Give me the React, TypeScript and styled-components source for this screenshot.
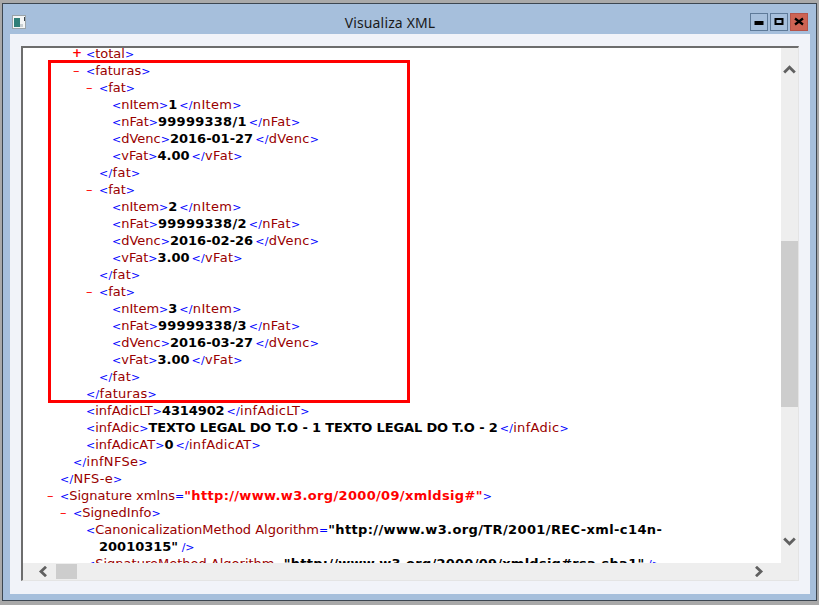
import React from 'react';
import styled, { createGlobalStyle } from 'styled-components';

const GlobalStyle = createGlobalStyle`
  html, body {
    margin: 0;
    padding: 0;
    background-color: #a9a9a9;
  }
`;

const Screen = styled.div`
  width: 819px;
  height: 605px;
  padding: 3px 2px 4px 2px;
  box-sizing: border-box;
  overflow: hidden;
`;

const Window = styled.div`
  height: 100%;
  box-sizing: border-box;
  border: 1px solid #3c4650;
  background-color: #a6bfdc;
  display: flex;
  flex-direction: column;
  padding: 0 6px 6px 7px;
`;

const TitleBar = styled.div`
  height: 30px;
  flex: none;
  display: flex;
  align-items: flex-start;
  position: relative;
`;

const AppIcon = styled.svg`
  width: 14px;
  height: 14px;
  margin-left: 2px;
  margin-top: 11px;
`;

const Title = styled.div`
  position: absolute;
  left: 0;
  right: 40px;
  top: 10px;
  text-align: center;
  font-family: 'Noto Sans', 'DejaVu Sans', sans-serif;
  font-size: 14px;
  letter-spacing: 0.15px;
  line-height: 18px;
  color: #1a1a1a;
`;

const Controls = styled.div`
  margin-left: auto;
  margin-top: 9px;
  margin-right: 2px;
  display: flex;
  gap: 2px;
`;

const ControlButton = styled.div<{ $close?: boolean }>`
  width: 16px;
  height: 16px;
  border: 1px solid ${(p) => (p.$close ? '#b5534a' : '#5e7a99')};
  background-color: ${(p) => (p.$close ? '#cd6353' : '#a6bfdc')};
  display: flex;
  align-items: center;
  justify-content: center;
`;

const Client = styled.div`
  flex: 1;
  min-height: 0;
  background-color: #f1f3f9;
  padding: 12px 11px 13px 11px;
  display: flex;
`;

const Browser = styled.div`
  flex: 1;
  min-width: 0;
  display: grid;
  grid-template-columns: 1fr 17px;
  grid-template-rows: 1fr 17px;
  border-top: 2px solid #6d6d6d;
  border-left: 2px solid #6d6d6d;
  border-right: 1px solid #e4e4e4;
  border-bottom: 1px solid #e4e4e4;
  background-color: #eeeeee;
  position: relative;
`;

const Viewport = styled.div`
  background-color: #ffffff;
  overflow: hidden;
  min-height: 0;
`;

const XmlBody = styled.div`
  margin-top: -3px;
`;

const XmlLine = styled.div<{ $indent: number }>`
  padding-left: ${(p) => p.$indent}px;
  height: 17px;
  line-height: 17px;
  font-family: 'DejaVu Sans', Verdana, sans-serif;
  font-size: 13px;
  white-space: pre;
  position: relative;
`;

const Toggle = styled.span<{ $plus?: boolean }>`
  position: absolute;
  margin-left: ${(p) => (p.$plus ? -14 : -13)}px;
  color: #ff0000;
  font-size: ${(p) => (p.$plus ? 12 : 13)}px;
  font-weight: ${(p) => (p.$plus ? 700 : 400)};
`;

const Mark = styled.span`
  color: #0000ff;
  font-size: 11px;
`;

const Name = styled.span`
  color: #990000;
`;

const ClosingTag = styled.span`
  letter-spacing: 0.3px;
`;

const Value = styled.span<{ $spacing?: number }>`
  color: #000000;
  font-weight: 700;
  letter-spacing: ${(p) => p.$spacing ?? 0}px;
`;

const LeafValue = styled(Value)`
  margin-right: 2px;
`;

const AttrValue = styled.span`
  color: #ff0000;
  font-weight: 700;
  letter-spacing: 0.33px;
`;

const Highlight = styled.div`
  position: absolute;
  left: 25px;
  top: 12px;
  width: 356px;
  height: 337px;
  border: 3px solid #ff0000;
  pointer-events: none;
`;

const VerticalBar = styled.div`
  display: flex;
  flex-direction: column;
  align-items: center;
  background-color: #eeeeee;
  padding-top: 17px;
  min-height: 0;
`;

const VerticalThumb = styled.div`
  width: 17px;
  height: 166px;
  margin-top: 167px;
  background-color: #cdcdcd;
`;

const HorizontalBar = styled.div`
  display: flex;
  align-items: center;
  background-color: #eeeeee;
  padding-left: 15px;
`;

const HorizontalThumb = styled.div`
  width: 21px;
  height: 15px;
  margin-left: 8px;
  background-color: #cdcdcd;
`;

const ArrowV = styled.svg`
  width: 13px;
  height: 9px;
  flex: none;
  display: block;
`;

const ArrowH = styled.svg`
  width: 10px;
  height: 11px;
  flex: none;
  display: block;
`;

const PushEnd = styled.div`
  margin-top: auto;
  margin-bottom: 17px;
  display: flex;
`;

const PushRight = styled.div`
  margin-left: auto;
  margin-right: 17px;
  display: flex;
`;

const Corner = styled.div`
  background-color: #eeeeee;
`;

const Open: React.FC<{ name: string }> = ({ name }) => (
  <>
    <Mark>&lt;</Mark>
    <Name>{name}</Name>
    <Mark>&gt;</Mark>
  </>
);

const Close: React.FC<{ name: string }> = ({ name }) => (
  <ClosingTag>
    <Mark>&lt;/</Mark>
    <Name>{name}</Name>
    <Mark>&gt;</Mark>
  </ClosingTag>
);

const Leaf: React.FC<{ name: string; value: string; indent: number; spacing?: number }> = ({
  name,
  value,
  indent,
  spacing,
}) => (
  <XmlLine $indent={indent}>
    <Open name={name} />
    <LeafValue $spacing={spacing}>{value}</LeafValue>
    <Close name={name} />
  </XmlLine>
);

const faturas = [
  { item: '1', nFat: '99999338/1', venc: '2016-01-27', val: '4.00' },
  { item: '2', nFat: '99999338/2', venc: '2016-02-26', val: '3.00' },
  { item: '3', nFat: '99999338/3', venc: '2016-03-27', val: '3.00' },
];

const App: React.FC = () => {
  return (
    <>
      <GlobalStyle />
      <Screen>
        <Window>
          <TitleBar>
            <AppIcon viewBox="0 0 14 14">
              <rect x="0.5" y="0.5" width="13" height="13" fill="#f4f6f6" stroke="#9aa3a8" />
              <rect x="2" y="3" width="6" height="9" fill="#2f7f78" />
              <rect x="8" y="9" width="3" height="3" fill="#c9cfd2" />
              <rect x="12" y="2" width="1" height="4" fill="#3c4650" />
            </AppIcon>
            <Title>Visualiza XML</Title>
            <Controls>
              <ControlButton>
                <svg width="10" height="16" viewBox="0 0 10 16">
                  <rect x="0.5" y="7" width="9" height="4" fill="#000000" />
                </svg>
              </ControlButton>
              <ControlButton>
                <svg width="10" height="16" viewBox="0 0 10 16">
                  <path d="M0.5 4h9v7h-9z M2.5 6v3h5v-3z" fill="#000000" fillRule="evenodd" />
                </svg>
              </ControlButton>
              <ControlButton $close>
                <svg width="10" height="16" viewBox="0 0 10 16">
                  <path d="M1 4.5 L9 10.5 M9 4.5 L1 10.5" stroke="#000000" strokeWidth="2.2" />
                </svg>
              </ControlButton>
            </Controls>
          </TitleBar>
          <Client>
            <Browser>
              <Viewport>
                <XmlBody>
                  <XmlLine $indent={63}>
                    <Toggle $plus>+</Toggle>
                    <Open name="total" />
                  </XmlLine>
                  <XmlLine $indent={63}>
                    <Toggle>–</Toggle>
                    <Open name="faturas" />
                  </XmlLine>
                  {faturas.map((f) => (
                    <React.Fragment key={f.item}>
                      <XmlLine $indent={76}>
                        <Toggle>–</Toggle>
                        <Open name="fat" />
                      </XmlLine>
                      <Leaf indent={89} name="nItem" value={f.item} />
                      <Leaf indent={89} name="nFat" value={f.nFat} spacing={0.25} />
                      <Leaf indent={89} name="dVenc" value={f.venc} />
                      <Leaf indent={89} name="vFat" value={f.val} />
                      <XmlLine $indent={76}>
                        <Close name="fat" />
                      </XmlLine>
                    </React.Fragment>
                  ))}
                  <XmlLine $indent={63}>
                    <Close name="faturas" />
                  </XmlLine>
                  <Leaf indent={63} name="infAdicLT" value="4314902" spacing={-0.1} />
                  <Leaf
                    indent={63}
                    name="infAdic"
                    value="TEXTO LEGAL DO T.O - 1 TEXTO LEGAL DO T.O - 2"
                    spacing={-0.15}
                  />
                  <Leaf indent={63} name="infAdicAT" value="0" />
                  <XmlLine $indent={50}>
                    <Close name="infNFSe" />
                  </XmlLine>
                  <XmlLine $indent={37}>
                    <Close name="NFS-e" />
                  </XmlLine>
                  <XmlLine $indent={37}>
                    <Toggle>–</Toggle>
                    <Mark>&lt;</Mark>
                    <Name>Signature xmlns</Name>
                    <Mark>=</Mark>
                    <AttrValue>"http://www.w3.org/2000/09/xmldsig#"</AttrValue>
                    <Mark>&gt;</Mark>
                  </XmlLine>
                  <XmlLine $indent={50}>
                    <Toggle>–</Toggle>
                    <Open name="SignedInfo" />
                  </XmlLine>
                  <XmlLine $indent={63}>
                    <Mark>&lt;</Mark>
                    <Name>CanonicalizationMethod Algorithm</Name>
                    <Mark>=</Mark>
                    <Value $spacing={0.38}>"http://www.w3.org/TR/2001/REC-xml-c14n-</Value>
                  </XmlLine>
                  <XmlLine $indent={76}>
                    <Value>20010315"</Value>
                    <Mark> /&gt;</Mark>
                  </XmlLine>
                  <XmlLine $indent={63}>
                    <Mark>&lt;</Mark>
                    <Name>SignatureMethod Algorithm</Name>
                    <Mark>=</Mark>
                    <Value $spacing={0.25}>"http://www.w3.org/2000/09/xmldsig#rsa-sha1"</Value>
                    <Mark> /&gt;</Mark>
                  </XmlLine>
                </XmlBody>
              </Viewport>
              <VerticalBar>
                <ArrowV viewBox="0 0 13 9">
                  <path d="M1.2 7.6 L6.5 2.3 L11.8 7.6" fill="none" stroke="#606060" strokeWidth="2.8" />
                </ArrowV>
                <VerticalThumb />
                <PushEnd>
                  <ArrowV viewBox="0 0 13 9">
                    <path d="M1.2 1.4 L6.5 6.7 L11.8 1.4" fill="none" stroke="#606060" strokeWidth="2.8" />
                  </ArrowV>
                </PushEnd>
              </VerticalBar>
              <HorizontalBar>
                <ArrowH viewBox="0 0 10 11">
                  <path d="M8 0.8 L3 5.5 L8 10.2" fill="none" stroke="#606060" strokeWidth="2.8" />
                </ArrowH>
                <HorizontalThumb />
                <PushRight>
                  <ArrowH viewBox="0 0 10 11">
                    <path d="M2 0.8 L7 5.5 L2 10.2" fill="none" stroke="#606060" strokeWidth="2.8" />
                  </ArrowH>
                </PushRight>
              </HorizontalBar>
              <Corner />
              <Highlight />
            </Browser>
          </Client>
        </Window>
      </Screen>
    </>
  );
};

export default App;
